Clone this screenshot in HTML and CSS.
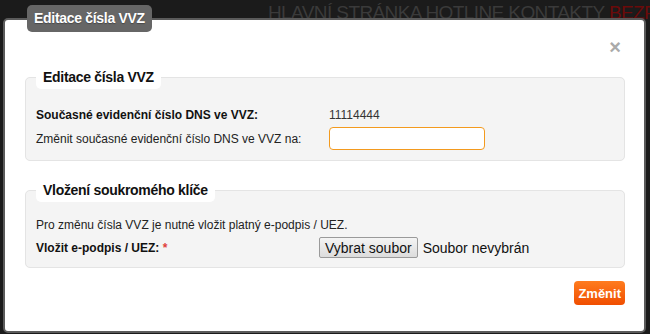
FILE: index.html
```html
<!DOCTYPE html>
<html lang="cs">
<head>
    <meta charset="UTF-8">
    <title>Editace čísla VVZ</title>
    <link rel="stylesheet" href="styles.css">
</head>
<body>

<div class="topnav">
    <span>HLAVNÍ STRÁNKA</span>
    <span>HOTLINE</span>
    <span>KONTAKTY</span>
    <span class="red">BEZPEČNOST</span>
</div>

<div class="dialog">
    <div class="dialog-title">Editace čísla VVZ</div>
    <div class="dialog-close">&times;</div>

    <fieldset class="box first">
        <legend>Editace čísla VVZ</legend>
        <div class="row top">
            <span class="label strong">Současné evidenční číslo DNS ve VVZ:</span>
            <span class="value">11114444</span>
        </div>
        <div class="row">
            <span class="label">Změnit současné evidenční číslo DNS ve VVZ na:</span>
            <input type="text" class="field">
        </div>
    </fieldset>

    <fieldset class="box second">
        <legend>Vložení soukromého klíče</legend>
        <p class="note">Pro změnu čísla VVZ je nutné vložit platný e-podpis / UEZ.</p>
        <div class="row">
            <span class="label strong">Vložit e-podpis / UEZ: <span class="req">*</span></span>
            <span class="file">
                <button class="file-btn">Vybrat soubor</button>
                <span class="file-name">Soubor nevybrán</span>
            </span>
        </div>
    </fieldset>

    <div class="actions">
        <button class="btn-orange">Změnit</button>
    </div>
</div>

</body>
</html>
```

FILE: styles.css
```css
body {
    margin: 0;
    height: 334px;
    overflow: hidden;
    background-color: #1b1b1b;
    font-family: "Liberation Sans", Arial, sans-serif;
    font-size: 12px;
    color: #111;
}
.topnav {
    width: 650px;
    height: 22px;
    margin-bottom: -4px;
    padding: 2px 0 0 268px;
    box-sizing: border-box;
    font-size: 19px;
    line-height: 22px;
    color: #3a3a3a;
    white-space: nowrap;
    overflow: hidden;
    letter-spacing: -0.6px;
}
.topnav .red {
    color: #6b0a0a;
}
.dialog {
    position: relative;
    width: 639px;
    height: 311px;
    margin-left: 3px;
    margin-top: -2px;
    background-color: #fff;
    border: 2px solid #5b5b5b;
    border-radius: 5px;
}
.dialog-title {
    position: absolute;
    left: 22px;
    top: -15px;
    padding: 0 7px;
    height: 27px;
    line-height: 27px;
    background-color: #666;
    border-radius: 5px;
    color: #fff;
    font-weight: bold;
    font-size: 14px;
    letter-spacing: -0.3px;
    text-shadow: 0 1px 1px rgba(0, 0, 0, 0.3);
}
.dialog-close {
    position: absolute;
    right: 23px;
    top: 16px;
    font-size: 20px;
    font-weight: bold;
    color: #aaa;
}
.box {
    margin: 0 19px 0 20px;
    padding: 0 10px;
    background-color: #f4f4f4;
    border: 1px solid #e4e4e4;
    border-radius: 5px;
}
.box.first {
    margin-top: 46px;
}
.box.second {
    margin-top: 18px;
}
.box legend {
    padding: 0 7px;
    height: 23px;
    line-height: 23px;
    background-color: #fff;
    border-radius: 5px;
    font-size: 14px;
    font-weight: bold;
    letter-spacing: -0.3px;
    color: #111;
}
.row {
    display: grid;
    grid-template-columns: 293px 1fr;
    align-items: center;
}
.row.top {
    margin-top: 19px;
}
.first .row + .row {
    margin-top: 5px;
    margin-bottom: 10px;
}
.label {
    color: #222;
}
.strong {
    font-weight: bold;
    color: #111;
}
.value {
    color: #333;
}
.field {
    width: 156px;
    height: 23px;
    box-sizing: border-box;
    border: 1px solid #f39a1e;
    border-radius: 4px;
    background: #fff;
    margin: 0;
}
.note {
    margin: 16px 0 5px;
    color: #222;
}
.second .row {
    margin-bottom: 9px;
}
.req {
    color: #e0413b;
}
.file {
    display: flex;
    align-items: center;
    gap: 5px;
    margin-left: -10px;
    font-size: 14px;
}
.file-btn {
    height: 21px;
    padding: 0 5px;
    font-family: "Liberation Sans", Arial, sans-serif;
    font-size: 14px;
    color: #111;
    border: 1px solid #9a9a9a;
    border-radius: 2px;
    background: linear-gradient(#f4f4f4, #dcdcdc);
}
.file-name {
    color: #111;
}
.actions {
    display: flex;
    justify-content: flex-end;
    margin: 13px 19px 0 0;
}
.btn-orange {
    height: 24px;
    padding: 0 4px;
    border: none;
    border-radius: 4px;
    background: linear-gradient(#ff7c1f, #f04e00);
    color: #fff;
    font-family: "Liberation Sans", Arial, sans-serif;
    font-size: 13px;
    font-weight: bold;
}
```
